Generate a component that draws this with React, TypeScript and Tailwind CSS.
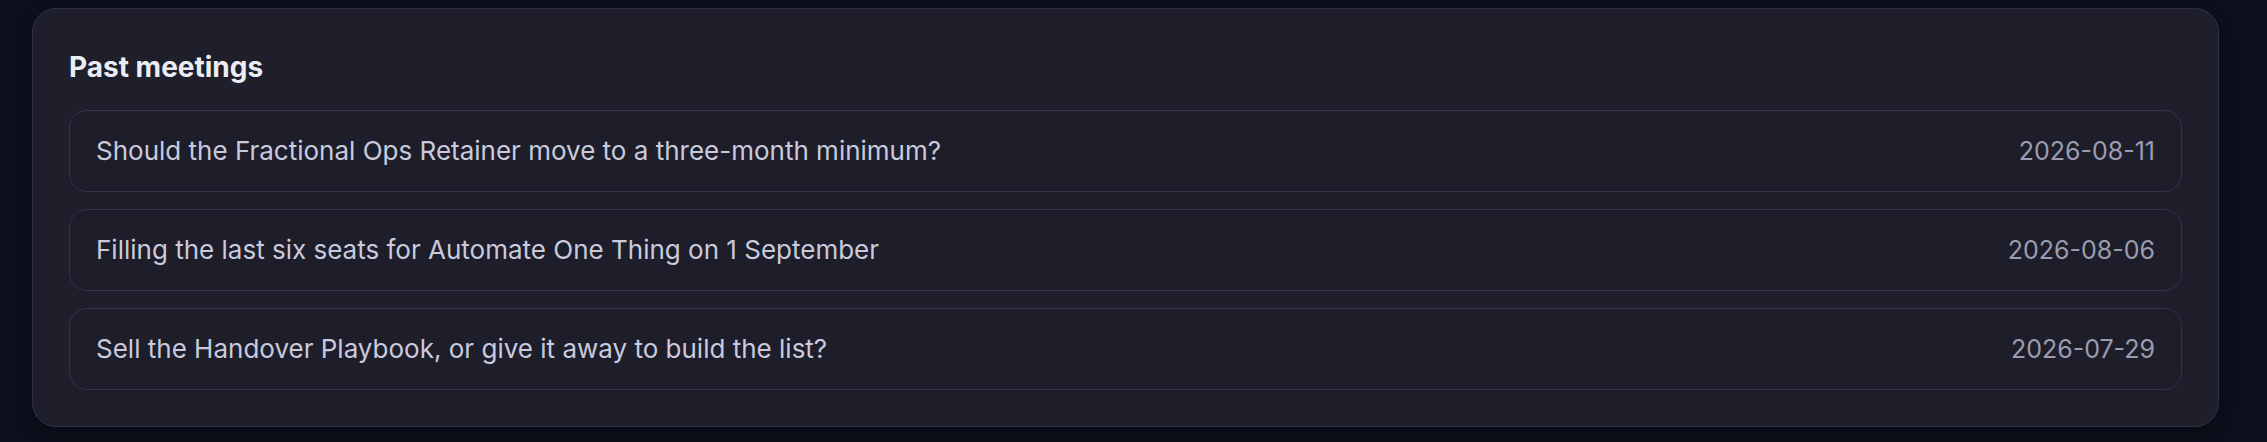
const meetings = [
  { title: "Should the Fractional Ops Retainer move to a three-month minimum?", date: "2026-08-11" },
  { title: "Filling the last six seats for Automate One Thing on 1 September", date: "2026-08-06" },
  { title: "Sell the Handover Playbook, or give it away to build the list?", date: "2026-07-29" },
];

export default function App() {
  return (
    <div
      className="min-h-screen bg-[#0b101c] pt-2"
      style={{ fontFamily: "Inter, 'Noto Sans', sans-serif" }}
    >
      <section className="ml-8 w-[2187px] rounded-[24px] border border-[#2f3047] bg-[#1e1f2b] p-9 shadow-[0_6px_16px_rgba(0,0,0,0.35)]">
        <h2 className="mb-[20px] text-[28px] font-bold leading-[45px] text-[#ececf4]">Past meetings</h2>
        <ul className="flex flex-col gap-[17px]">
          {meetings.map((m) => (
            <li
              key={m.date}
              className="flex items-center justify-between rounded-[18px] border border-[#33344c] bg-[#1d1e2a] px-[26px] py-[20px] leading-[40px]"
            >
              <span className="text-[26px] text-[#c9cadd]">{m.title}</span>
              <span className="text-[25px] text-[#9b9cb1]">{m.date}</span>
            </li>
          ))}
        </ul>
      </section>
    </div>
  );
}
